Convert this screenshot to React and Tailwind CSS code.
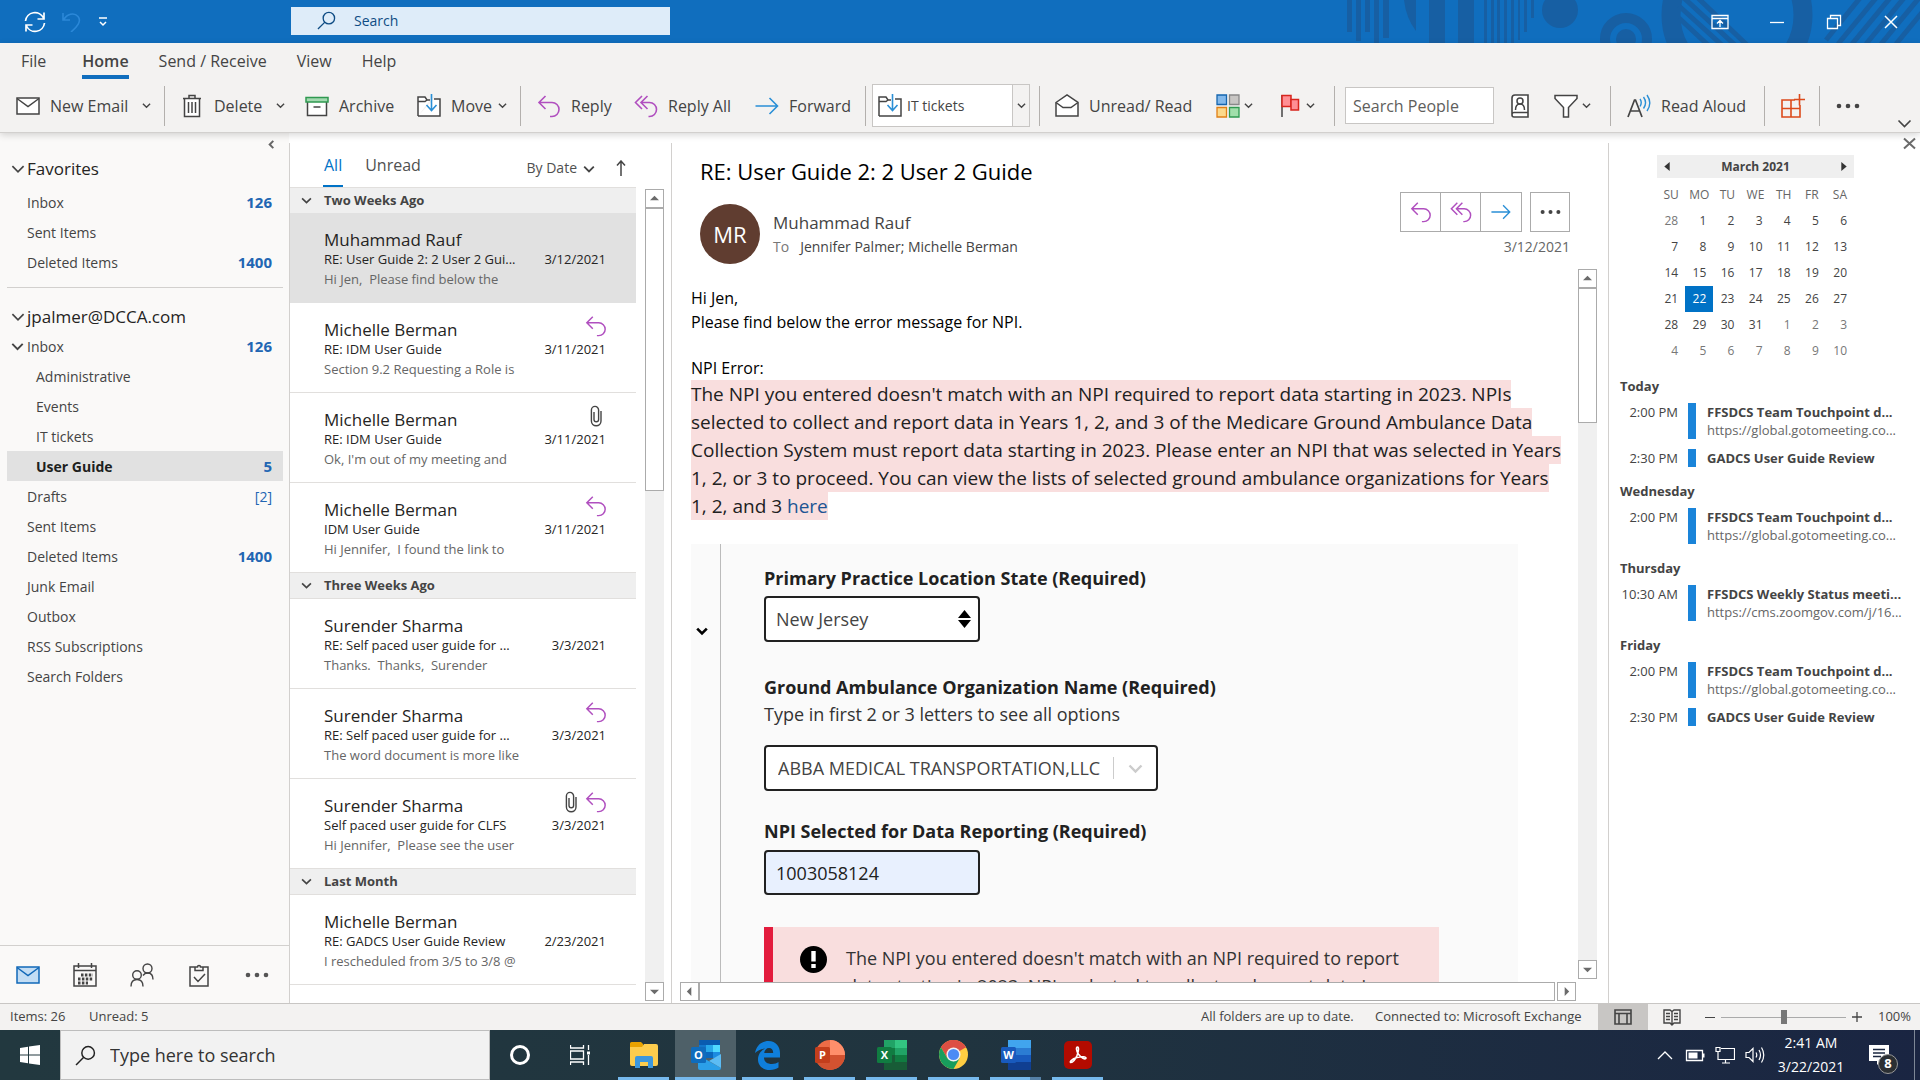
import { useState } from 'react';

const PURPLE = '#b04fbf';
const BLUE = '#2a8fd6';

function Svg({ size = 24, box = '0 0 24 24', className = '', children }) {
  return (
    <svg
      width={size}
      height={size}
      viewBox={box}
      fill="none"
      stroke="#444"
      strokeWidth="1.3"
      className={`shrink-0 ${className}`}
      aria-hidden="true"
    >
      {children}
    </svg>
  );
}

const Chevron = ({ size = 10, color = '#444', width = 1.5, className = '' }) => (
  <Svg size={size} box="0 0 10 10" className={className}>
    <path d="M1 3l4 4 4-4" stroke={color} strokeWidth={width} />
  </Svg>
);

const MailIcon = ({ stroke = '#444', fill = '#fff' }) => (
  <Svg>
    <path d="M1 4h22v16H1z" stroke={stroke} fill={fill} strokeWidth="1.5" />
    <path d="M1 4.5l11 8 11-8" stroke={stroke} strokeWidth="1.5" />
  </Svg>
);

const TrashIcon = () => (
  <Svg>
    <path d="M4.500 4.500v18h15v-18" fill="#fff" strokeWidth="1.500" />
    <path d="M3 4.500h18M9 4V1.500h6V4M8.500 8v11M12 8v11M15.500 8v11" strokeWidth="1.500" />
  </Svg>
);

const ArchiveIcon = () => (
  <Svg>
    <path d="M2.500 8v13.500h19V8" fill="#fff" strokeWidth="1.500" />
    <path d="M1 3.500h22V8H1z" fill="#a3d9b0" stroke="#2f9950" strokeWidth="1.500" />
    <path d="M8.500 13h7" strokeWidth="1.500" />
  </Svg>
);

const MoveIcon = () => (
  <Svg>
    <path d="M1 22V3h7l2 3h3M17 5h6v17H1" fill="#fff" strokeWidth="1.500" />
    <path d="M1 7.500h7l2-1.500" strokeWidth="1.500" />
    <path d="M14.500 0v16M9.500 11l5 5.500 5-5.500" stroke={BLUE} strokeWidth="1.600" />
  </Svg>
);

const ReplyIcon = ({ size = 24 }) => (
  <Svg size={size}>
    <path d="M8.500 2L2 8.500 8.500 15M2 8.500h13a7 7 0 0 1 0 14h-2" stroke={PURPLE} strokeWidth="1.600" />
  </Svg>
);

const ReplyAllIcon = ({ size = 24 }) => (
  <Svg size={size}>
    <path
      d="M8 2L1.500 8.500 8 15M13.500 2L7 8.500l6.500 6.500M7 8.500h8.500a7 7 0 0 1 0 14h-1"
      stroke={PURPLE}
      strokeWidth="1.600"
    />
  </Svg>
);

const ForwardIcon = ({ size = 24 }) => (
  <Svg size={size}>
    <path d="M.5 12h22M14.500 4l8 8-8 8" stroke={BLUE} strokeWidth="1.600" />
  </Svg>
);

const OpenMailIcon = () => (
  <Svg>
    <path d="M1 8.500L12 1l11 7.500V22H1z" fill="#fff" strokeWidth="1.500" />
    <path d="M1 8.500l7 5h8l7-5" strokeWidth="1.500" />
  </Svg>
);

const CategoriesIcon = () => (
  <Svg>
    <path d="M1 1h9.500v9.500H1z" fill="#83b9eb" stroke="#1565ae" />
    <path d="M13.500 1H23v9.500h-9.500z" fill="#c8c6c4" stroke="#888" />
    <path d="M1 13.500h9.500V23H1z" fill="#fbd98b" stroke="#e07f16" />
    <path d="M13.500 13.500H23V23h-9.500z" fill="#a1dfab" stroke="#2f9950" />
  </Svg>
);

const FlagIcon = () => (
  <Svg>
    <path d="M4 1v22" strokeWidth="1.500" />
    <path d="M4 1.500h9v11H4z" fill="#ff8f94" stroke="#d8251d" strokeWidth="1.500" />
    <path d="M13 5.500h7.500v10.500h-7.500z" fill="#ff8f94" stroke="#d8251d" strokeWidth="1.500" />
  </Svg>
);

const AddressBookIcon = () => (
  <Svg>
    <path d="M4 4a3 3 0 0 1 3-3h13v22H6a2 2 0 0 1-2-2zM4 20.500a2 2 0 0 1 2-2h14" fill="#fff" strokeWidth="1.600" />
    <circle cx="12" cy="7" r="3" strokeWidth="1.500" />
    <path d="M7.500 16c0-4 2-6 4.500-6s4.500 2 4.500 6" strokeWidth="1.500" />
  </Svg>
);

const FunnelIcon = () => (
  <Svg>
    <path d="M1 1.500h22v3l-8.500 9V23h-5v-9.500L1 4.500z" fill="#fff" strokeWidth="1.500" />
  </Svg>
);

const ReadAloudIcon = () => (
  <Svg>
    <path d="M1 23L7.500 6h1L15 23M3.500 17h9" strokeWidth="1.700" />
    <path d="M13 5c1.500 2 1.500 5 0 7.500M16.500 3c2.500 3.500 2.500 8 0 11.500M20 1c3.500 5 3.500 11 0 16" stroke={BLUE} strokeWidth="1.400" />
  </Svg>
);

const AddInsIcon = () => (
  <Svg>
    <path d="M1 6h9v17H1zM1 14.500h18V23H10M10 6v8.500M19 14.500V11M10 6h4M18.500 0v11.500M13 5.500h11" stroke="#dc4a1b" strokeWidth="1.600" />
  </Svg>
);

const SearchIcon = ({ size = 20, color = '#0f4c84' }) => (
  <Svg size={size} box="0 0 20 20">
    <circle cx="12.500" cy="7.500" r="6" stroke={color} strokeWidth="1.400" />
    <path d="M8.300 11.700L1 19" stroke={color} strokeWidth="1.400" />
  </Svg>
);

const ClipIcon = () => (
  <Svg size={22} box="0 0 22 22">
    <path d="M16 6v10a4.800 4.800 0 0 1-9.600 0V5a3.600 3.600 0 0 1 7.200 0v9.500a2 2 0 0 1-4.600 0V7" strokeWidth="1.400" />
  </Svg>
);

const Triangle = ({ dir }) => {
  const paths = {
    up: 'M0 7l5-5 5 5z',
    down: 'M0 3l5 5 5-5z',
    left: 'M7 0L2 5l5 5z',
    right: 'M3 0l5 5-5 5z',
  };
  return (
    <svg width="9" height="9" viewBox="0 0 10 10" fill="#6b6b6b" aria-hidden="true">
      <path d={paths[dir]} />
    </svg>
  );
};

const Dots = ({ color = '#444', size = 24 }) => (
  <svg width={size} height="6" viewBox="0 0 24 6" fill={color} aria-hidden="true">
    <circle cx="3" cy="3" r="2.300" />
    <circle cx="12" cy="3" r="2.300" />
    <circle cx="21" cy="3" r="2.300" />
  </svg>
);

function TitleBar() {
  return (
    <header className="relative flex h-[43px] shrink-0 items-center bg-[#106ebe]">
      <svg className="absolute top-0 right-0" width="580" height="43" viewBox="1340 0 580 43" fill="#175fa3" aria-hidden="true">
        <path d="M1347 0h5v32h-5zM1356 0h5v41h-5zM1365 0h5v32h-5zM1374 0h5v43h-5zM1383 0h6v38h-6zM1404 0h12v31q-10-13-12-31zM1429 0h16v43h-16zM1458 0h16v43h-16zM1484 0h3v43h-3zM1491 0h3v43h-3zM1497 0h3v43h-3zM1504 0h3v43h-3zM1511 0h3v43h-3zM1518 0h2v40h-2zM1524 0h3v32h-3zM1531 0h3v18h-3z" />
        <circle cx="1560" cy="10" r="18" />
        <circle cx="1626" cy="39" r="10" />
        <circle cx="1626" cy="39" r="21" fill="none" stroke="#175fa3" strokeWidth="10" />
        <circle cx="1737" cy="15" r="66" fill="none" stroke="#175fa3" strokeWidth="19" />
        <g stroke="#175fa3" strokeWidth="5">
          <path d="M1679 6l44 40M1679 18l30 28M1684 -2l52 48M1698 -2l50 48" />
          <path d="M1826 40l34-42M1838 44l38-46M1852 44l38-46M1866 44l38-46M1881 44l38-46M1896 44l38-46" />
        </g>
      </svg>
      <div className="flex w-[291px] items-center gap-4 pl-6">
        <button aria-label="Send/Receive all folders">
          <Svg size={22} box="0 0 22 22">
            <path d="M1.500 10a9.500 9.500 0 0 1 18-3M20.500 12a9.500 9.500 0 0 1-18 3M20 1.500V8h-6.500M2 20.500V14h6.500" stroke="#fff" strokeWidth="1.700" />
          </Svg>
        </button>
        <button aria-label="Undo">
          <Svg size={20} box="0 0 20 20">
            <path d="M1 1v7h7M1.500 8C5 2 12 0 16 4.500 20 9 15 15 9 20" stroke="#2b88d8" strokeWidth="1.600" />
          </Svg>
        </button>
        <button aria-label="Customize toolbar">
          <Svg size={10} box="0 0 10 10">
            <path d="M1 1h8M2 5l3 3 3-3" stroke="#fff" strokeWidth="1.500" />
          </Svg>
        </button>
      </div>
      <label className="relative -top-px flex h-7 w-[379px] items-center gap-[18px] bg-[#deecf9] pl-[26px]">
        <SearchIcon size={19} />
        <input
          type="text"
          aria-label="Search"
          placeholder="Search"
          className="w-full bg-transparent text-[14px] text-[#0f4c84] outline-none placeholder:text-[#0f4c84]"
        />
      </label>
      <div className="relative ml-auto flex items-center gap-[39px] pr-5">
        <button aria-label="Ribbon display options">
          <Svg size={18} box="0 0 18 18">
            <path d="M1 2.500h16v13H1zM1 5.500h16M9 14V8M6 10.500L9 7.500l3 3" stroke="#fff" />
          </Svg>
        </button>
        <button aria-label="Minimize">
          <Svg size={18} box="0 0 18 18">
            <path d="M2 9.500h14" stroke="#fff" />
          </Svg>
        </button>
        <button aria-label="Restore">
          <Svg size={18} box="0 0 18 18">
            <path d="M2.500 5.500h10v10h-10zM5.500 5V2.500h10v10H13" stroke="#fff" />
          </Svg>
        </button>
        <button aria-label="Close">
          <Svg size={18} box="0 0 18 18">
            <path d="M3 3l12 12M15 3L3 15" stroke="#fff" strokeWidth="1.500" />
          </Svg>
        </button>
      </div>
    </header>
  );
}

const Separator = ({ className = '' }) => <div className={`h-10 w-px shrink-0 bg-[#b3b0ad] ${className}`} />;

function Tool({ icon, label, chevron, width, name }) {
  return (
    <button className={`flex h-10 shrink-0 items-center ${width}`} aria-label={name}>
      {icon}
      {label ? <span className="ml-[10px] whitespace-nowrap">{label}</span> : null}
      {chevron ? <Chevron size={9} className={label ? 'ml-auto' : 'ml-1'} /> : null}
    </button>
  );
}

const menuTabs = ['File', 'Home', 'Send / Receive', 'View', 'Help'];

function Ribbon() {
  const [tab, setTab] = useState('Home');
  return (
    <div className="relative z-10 shrink-0 border-b border-[#d2d0ce] bg-[#f3f2f1] text-[#444] shadow-[0_2px_7px_rgba(0,0,0,0.16)]">
      <nav className="flex h-9 items-end gap-[30px] pl-[21px] text-[16px]">
        {menuTabs.map((t) => (
          <button
            key={t}
            onClick={() => setTab(t)}
            className={`border-b-4 pb-[2px] leading-6 ${t === 'File' ? 'mr-[6px]' : ''} ${
              t === tab ? 'border-[#106ebe] font-semibold' : 'border-transparent'
            }`}
          >
            {t}
          </button>
        ))}
      </nav>
      <div className="flex h-[53px] items-center pl-4 text-[16px]">
        <Tool icon={<MailIcon />} label="New Email" chevron width="w-[135px]" />
        <Separator className="mr-[15px] ml-[13px]" />
        <Tool icon={<TrashIcon />} label="Delete" chevron width="w-[105px]" />
        <Tool icon={<ArchiveIcon />} label="Archive" width="ml-5 w-[92px]" />
        <Tool icon={<MoveIcon />} label="Move" chevron width="ml-5 w-[90px]" />
        <Separator className="ml-[13px] mr-4" />
        <Tool icon={<ReplyIcon />} label="Reply" width="w-[97px]" />
        <Tool icon={<ReplyAllIcon />} label="Reply All" width="w-[121px]" />
        <Tool icon={<ForwardIcon />} label="Forward" width="w-[110px]" />
        <Separator className="mr-[6px]" />
        <div className="flex h-[43px] shrink-0 border border-[#c8c6c4] bg-white text-[14px]">
          <button className="flex w-[139px] items-center gap-[5px] pl-[5px]">
            <MoveIcon />
            IT tickets
          </button>
          <button className="flex w-[17px] items-center justify-center border-l border-[#c8c6c4] bg-[#f3f2f1]" aria-label="More quick steps">
            <Chevron size={9} />
          </button>
        </div>
        <Separator className="mr-[15px] ml-[9px]" />
        <Tool icon={<OpenMailIcon />} label="Unread/ Read" width="w-[161px]" />
        <Tool icon={<CategoriesIcon />} chevron width="w-[62px]" name="Categorize" />
        <Tool icon={<FlagIcon />} chevron width="w-[56px]" name="Follow up" />
        <Separator className="mr-[10px]" />
        <input
          type="text"
          aria-label="Search People"
          placeholder="Search People"
          className="h-[37px] w-[149px] shrink-0 border border-[#c8c6c4] bg-white px-[7px] text-[16px] outline-none placeholder:text-[#605e5c]"
        />
        <Tool icon={<AddressBookIcon />} width="ml-[14px] w-[46px]" name="Address book" />
        <Tool icon={<FunnelIcon />} chevron width="w-[56px]" name="Filter email" />
        <Separator className="mr-4" />
        <Tool icon={<ReadAloudIcon />} label="Read Aloud" width="w-[137px]" />
        <Separator className="mr-4" />
        <Tool icon={<AddInsIcon />} width="w-[38px]" name="Get add-ins" />
        <Separator className="mr-4" />
        <Tool icon={<Dots />} width="w-6" name="More commands" />
        <button className="ml-auto mt-9 pr-2" aria-label="Expand ribbon">
          <Chevron size={15} width={1.1} />
        </button>
      </div>
    </div>
  );
}

const favorites = [
  { name: 'Inbox', count: '126' },
  { name: 'Sent Items' },
  { name: 'Deleted Items', count: '1400' },
];

const folders = [
  { name: 'Inbox', count: '126', open: true },
  { name: 'Administrative', sub: true },
  { name: 'Events', sub: true },
  { name: 'IT tickets', sub: true },
  { name: 'User Guide', sub: true, count: '5', active: true },
  { name: 'Drafts', count: '[2]', light: true },
  { name: 'Sent Items' },
  { name: 'Deleted Items', count: '1400' },
  { name: 'Junk Email' },
  { name: 'Outbox' },
  { name: 'RSS Subscriptions' },
  { name: 'Search Folders' },
];

function Folder({ folder }) {
  return (
    <li>
      <button
        className={`flex h-[30px] w-full items-center pr-[11px] text-left text-[14px] ${
          folder.active ? 'bg-[#e1e1e1] font-bold text-[#201f1e]' : 'text-[#444]'
        }`}
      >
        <span className={`flex items-center justify-end ${folder.sub ? 'w-[29px]' : 'w-5'}`}>
          {folder.open ? <Chevron size={13} className="mr-[3px]" /> : null}
        </span>
        {folder.name}
        <span className={`ml-auto text-[#2266b3] ${folder.light ? '' : 'text-[15px] font-bold'}`}>{folder.count}</span>
      </button>
    </li>
  );
}

function FolderPane() {
  return (
    <aside className="flex w-[289px] shrink-0 flex-col bg-[#faf9f8]">
      <div className="flex-1 pt-[5px] pr-[6px] pl-[7px]">
        <div className="flex h-3 items-center justify-end pr-[7px]">
          <button aria-label="Minimize folder pane">
            <Svg size={9} box="0 0 10 10">
              <path d="M7 1L3 5l4 4" stroke="#666" strokeWidth="2.200" />
            </Svg>
          </button>
        </div>
        <h2 className="mt-1 flex h-[30px] items-center gap-[2px] pl-1 text-[17px] text-[#252423]">
          <Chevron size={14} width={1.2} />
          Favorites
        </h2>
        <ul className="mt-[3px] border-b border-[#d2d0ce] pb-[10px]">
          {favorites.map((f) => (
            <Folder key={f.name} folder={f} />
          ))}
        </ul>
        <h2 className="mt-[14px] flex h-[29px] items-center gap-[2px] pl-1 text-[17px] text-[#252423]">
          <Chevron size={14} width={1.2} />
          jpalmer@DCCA.com
        </h2>
        <ul>
          {folders.map((f) => (
            <Folder key={f.name} folder={f} />
          ))}
        </ul>
      </div>
      <nav className="flex h-[58px] items-center gap-[33px] border-t border-[#d2d0ce] pl-4">
        <button aria-label="Mail"><MailIcon stroke="#1068b8" fill="#c3ddf4" /></button>
        <button aria-label="Calendar">
          <Svg>
            <path d="M1 3h22v20H1zM1 7.500h22M5.500 0v5M18.500 0v5" strokeWidth="1.500" />
            <path d="M8 12h12M5 16h15M5 20h10" strokeWidth="3" strokeDasharray="2.500 1.400" />
          </Svg>
        </button>
        <button aria-label="People">
          <Svg>
            <circle cx="17.500" cy="5.500" r="4.500" strokeWidth="1.400" />
            <circle cx="7" cy="12" r="4.300" strokeWidth="1.400" />
            <path d="M1 23.500c0-4.500 2-7 6-7s6 2.500 6 7M13 12.500c1-1.500 2.500-2.500 4.500-2.500 4 0 5.500 3 5.500 6.500" strokeWidth="1.400" />
          </Svg>
        </button>
        <button aria-label="Tasks">
          <Svg>
            <path d="M8.500 4H3v19h18V4h-5.500M8 7.500h8V4h-2.500a1.500 1.500 0 0 0-3 0H8zM7 14l4 4.500 7-7.500" strokeWidth="1.500" />
          </Svg>
        </button>
        <button aria-label="More"><Dots color="#555" size={26} /></button>
      </nav>
    </aside>
  );
}

const groups = [
  {
    title: 'Two Weeks Ago',
    items: [
      { from: 'Muhammad Rauf', subject: 'RE: User Guide 2: 2 User 2 Gui...', date: '3/12/2021', preview: 'Hi Jen,\u00a0 Please find below the', active: true },
      { from: 'Michelle Berman', subject: 'RE: IDM User Guide', date: '3/11/2021', preview: 'Section 9.2 Requesting a Role is', replied: true },
      { from: 'Michelle Berman', subject: 'RE: IDM User Guide', date: '3/11/2021', preview: "Ok, I'm out of my meeting and", clip: true },
      { from: 'Michelle Berman', subject: 'IDM User Guide', date: '3/11/2021', preview: 'Hi Jennifer,\u00a0 I found the link to', replied: true },
    ],
  },
  {
    title: 'Three Weeks Ago',
    items: [
      { from: 'Surender Sharma', subject: 'RE: Self paced user guide for ...', date: '3/3/2021', preview: 'Thanks.\u00a0 Thanks,\u00a0 Surender' },
      { from: 'Surender Sharma', subject: 'RE: Self paced user guide for ...', date: '3/3/2021', preview: 'The word document is more like', replied: true },
      { from: 'Surender Sharma', subject: 'Self paced user guide for CLFS', date: '3/3/2021', preview: 'Hi Jennifer,\u00a0 Please see the user', clip: true, replied: true },
    ],
  },
  {
    title: 'Last Month',
    items: [
      { from: 'Michelle Berman', subject: 'RE: GADCS User Guide Review', date: '2/23/2021', preview: 'I rescheduled from 3/5 to 3/8 @' },
    ],
  },
];

function ScrollButton({ dir }) {
  return (
    <button className="flex size-[19px] shrink-0 items-center justify-center border border-[#ababab] bg-white" aria-label={`Scroll ${dir}`}>
      <Triangle dir={dir} />
    </button>
  );
}

function VerticalScroll({ thumb, className }) {
  return (
    <div className={`flex w-[19px] shrink-0 flex-col bg-[#f0f0f0] ${className}`}>
      <ScrollButton dir="up" />
      <div className={`border border-[#ababab] bg-white ${thumb}`} />
      <div className="flex-1" />
      <ScrollButton dir="down" />
    </div>
  );
}

function MessageItem({ item }) {
  return (
    <li
      className={`flex h-[90px] flex-col justify-center border-b pr-[30px] pl-[34px] pt-px ${
        item.active ? 'border-[#e1e1e1] bg-[#e1e1e1]' : 'border-[#e1dfdd]'
      }`}
    >
      <div className="flex h-[22px] items-center">
        <span className="text-[17px] text-[#252423]">{item.from}</span>
        <span className="-mt-2 -mr-px ml-auto flex items-center gap-[3px]">
          {item.clip ? <ClipIcon /> : null}
          {item.replied ? <ReplyIcon size={22} /> : null}
        </span>
      </div>
      <div className="flex h-[19px] items-center justify-between text-[13px] text-[#252423]">
        <span>{item.subject}</span>
        <span>{item.date}</span>
      </div>
      <p className="text-[13px] leading-[18px] text-[#666]">{item.preview}</p>
    </li>
  );
}

function MessageList() {
  return (
    <section className="flex w-[381px] shrink-0 gap-[9px] bg-white">
      <div className="flex w-[346px] flex-col">
        <div className="flex h-[54px] items-end pr-[7px] pl-[33px]">
          <button className="flex h-[34px] items-start border-b-2 border-[#0072c6] px-px text-[16px] leading-6 text-[#0072c6]">All</button>
          <button className="ml-[22px] flex h-[34px] items-start text-[16px] leading-6 text-[#505050]">Unread</button>
          <button className="ml-auto flex h-[34px] items-start gap-[6px] pt-[3px] text-[14px] leading-6 text-[#505050]">
            By Date
            <Chevron size={12} className="mt-[7px]" />
          </button>
          <button className="ml-[18px] flex h-[27px] items-start" aria-label="Sort direction">
            <Svg size={16} box="0 0 16 16">
              <path d="M8 16V1M4 5.500L8 1l4 4.500" strokeWidth="1.500" />
            </Svg>
          </button>
        </div>
        {groups.map((g, i) => (
          <div key={g.title}>
            <h3
              className={`flex items-center gap-3 border-[#e1dfdd] bg-[#efefef] pl-[11px] text-[13px] font-bold text-[#444] ${
                i === 0 ? 'h-[26px] border-t' : '-mt-px h-[27px] border-y'
              }`}
            >
              <Chevron size={11} />
              {g.title}
            </h3>
            <ul>
              {g.items.map((item, j) => (
                <MessageItem key={j} item={item} />
              ))}
            </ul>
          </div>
        ))}
      </div>
      <VerticalScroll thumb="h-[283px]" className="mt-14 mb-[2px]" />
    </section>
  );
}

function FormShot() {
  return (
    <div className="mt-6 flex w-[827px] flex-1 overflow-hidden bg-[#fafafa] text-[#212121]">
      <div className="flex w-[30px] shrink-0 justify-start border-r border-[#bbb] pt-[81px] pl-[5px]">
        <Chevron size={12} color="#000" width={2.2} />
      </div>
      <form className="flex flex-1 flex-col pt-[21px] pl-[43px] text-[18px]">
        <label htmlFor="state" className="leading-[26px] font-bold">Primary Practice Location State (Required)</label>
        <div className="relative mt-[5px] w-[216px] shrink-0">
          <select id="state" className="block h-[46px] w-full appearance-none rounded-[4px] border-2 border-[#212121] bg-white pl-[10px] text-[#444]">
            <option>New Jersey</option>
          </select>
          <svg className="pointer-events-none absolute top-[14px] right-[9px]" width="13" height="18" viewBox="0 0 13 18" aria-hidden="true">
            <path d="M6.500 0L13 8H0zM6.500 18L0 10h13z" fill="#000" />
          </svg>
        </div>
        <label htmlFor="org" className="mt-8 leading-[26px] font-bold">Ground Ambulance Organization Name (Required)</label>
        <p className="leading-7 text-[#333]">Type in first 2 or 3 letters to see all options</p>
        <div className="relative mt-[17px] w-[394px] shrink-0">
          <select id="org" className="block h-[46px] w-full appearance-none rounded-[4px] border-2 border-[#212121] bg-white pl-3 text-[#444]">
            <option>ABBA MEDICAL TRANSPORTATION,LLC</option>
          </select>
          <span className="pointer-events-none absolute top-3 right-[15px] flex h-[22px] items-center border-l border-[#ccc] pl-[14px]">
            <Chevron size={15} color="#ccc" width={1.6} />
          </span>
        </div>
        <label htmlFor="npi" className="mt-[27px] leading-[26px] font-bold">NPI Selected for Data Reporting (Required)</label>
        <input
          id="npi"
          type="text"
          defaultValue="1003058124"
          className="mt-[6px] h-[45px] w-[216px] shrink-0 rounded-[4px] border-2 border-[#212121] bg-[#e8f0fe] pl-[10px]"
        />
        <div className="mt-8 flex w-[675px] shrink-0 border-l-[9px] border-[#e31c3d] bg-[#f9dede] pt-[17px] pl-[27px]">
          <svg width="27" height="27" viewBox="0 0 27 27" className="mt-[2px] shrink-0" aria-hidden="true">
            <circle cx="13.500" cy="13.500" r="13.500" fill="#000" />
            <path d="M11.300 5h4.400v10.500h-4.400zM11.300 18h4.400v4h-4.400z" fill="#fff" />
          </svg>
          <p className="ml-[19px] h-[84px] leading-7 text-[#333]">
            The NPI you entered doesn't match with an NPI required to report
            <br />
            data starting in 2023. NPIs selected to collect and report data in
          </p>
        </div>
      </form>
    </div>
  );
}

const headerButton = 'flex h-full w-10 items-center justify-center';

function ReadingPane() {
  return (
    <section className="flex min-w-0 flex-1 flex-col bg-white pr-[11px] pl-2">
      <div className="pr-[27px] pl-5">
        <h1 className="pt-[23px] text-[22px] leading-[30px] text-black">RE: User Guide 2: 2 User 2 Guide</h1>
        <div className="flex items-start pt-[6px]">
          <div className="mt-3 flex size-[60px] items-center justify-center rounded-full bg-[#603d30] text-[22px] text-white">MR</div>
          <div className="mt-[18px] ml-[13px]">
            <p className="text-[17px] leading-[26px] text-[#444]">Muhammad Rauf</p>
            <p className="text-[14px] leading-[22px] text-[#444]">
              <span className="mr-[11px] text-[#777]">To</span>
              Jennifer Palmer; Michelle Berman
            </p>
          </div>
          <div className="ml-auto flex flex-col items-end">
            <div className="flex h-10 gap-2">
              <div className="flex divide-x divide-[#ababab] border border-[#ababab]">
                <button className={headerButton} aria-label="Reply"><ReplyIcon size={22} /></button>
                <button className={headerButton} aria-label="Reply all"><ReplyAllIcon size={22} /></button>
                <button className={headerButton} aria-label="Forward"><ForwardIcon size={20} /></button>
              </div>
              <button className={`${headerButton} border border-[#ababab]`} aria-label="More actions"><Dots size={21} /></button>
            </div>
            <p className="mt-[3px] text-[14px] leading-6 text-[#666]">3/12/2021</p>
          </div>
        </div>
      </div>
      <div className="flex min-h-0 flex-1">
        <article className="mt-[22px] flex min-w-0 flex-1 flex-col overflow-hidden pl-[11px] text-[16px] leading-6 text-black">
          <p>Hi Jen,</p>
          <p>Please find below the error message for NPI.</p>
          <p className="mt-[22px]">NPI Error:</p>
          <p className="text-[19px] leading-7 whitespace-nowrap text-[#212121]">
            <span className="bg-[#f9dede] box-decoration-clone py-px">
              The NPI you entered doesn't match with an NPI required to report data starting in 2023. NPIs
              <br />
              selected to collect and report data in Years 1, 2, and 3 of the Medicare Ground Ambulance Data
              <br />
              Collection System must report data starting in 2023. Please enter an NPI that was selected in Years
              <br />
              1, 2, or 3 to proceed. You can view the lists of selected ground ambulance organizations for Years
              <br />
              1, 2, and 3 <a href="#" className="text-[#205493]">here</a>
            </span>
          </p>
          <FormShot />
        </article>
        <VerticalScroll thumb="h-[135px]" className="mt-[5px] mb-[3px]" />
      </div>
      <div className="mr-[21px] mb-[2px] flex shrink-0">
        <ScrollButton dir="left" />
        <div className="flex-1 border border-[#ababab]" />
        <div className="w-[2px]" />
        <ScrollButton dir="right" />
      </div>
    </section>
  );
}

const weekDays = ['SU', 'MO', 'TU', 'WE', 'TH', 'FR', 'SA'];
const weeks = [
  [28, 1, 2, 3, 4, 5, 6],
  [7, 8, 9, 10, 11, 12, 13],
  [14, 15, 16, 17, 18, 19, 20],
  [21, 22, 23, 24, 25, 26, 27],
  [28, 29, 30, 31, 1, 2, 3],
  [4, 5, 6, 7, 8, 9, 10],
];

const touchpoint = { time: '2:00 PM', title: 'FFSDCS Team Touchpoint d...', url: 'https://global.gotomeeting.co...' };
const review = { time: '2:30 PM', title: 'GADCS User Guide Review' };

const agenda = [
  { day: 'Today', events: [touchpoint, review] },
  { day: 'Wednesday', events: [touchpoint] },
  { day: 'Thursday', events: [{ time: '10:30 AM', title: 'FFSDCS Weekly Status meeti...', url: 'https://cms.zoomgov.com/j/16...' }] },
  { day: 'Friday', events: [touchpoint, review] },
];

function isOtherMonth(row, day) {
  return (row === 0 && day > 20) || (row > 3 && day < 20);
}

function CalendarPane() {
  return (
    <aside className="w-[311px] shrink-0 bg-white text-[#444]">
      <div className="flex h-[22px] justify-end pt-1 pr-1">
        <button className="h-[13px]" aria-label="Close calendar">
          <Svg size={13} box="0 0 13 13">
            <path d="M1 1.500l11 10M12 1.500l-11 10" stroke="#6b6b6b" strokeWidth="2" />
          </Svg>
        </button>
      </div>
      <div className="ml-12 w-[197px]">
        <div className="flex h-[23px] items-center justify-between bg-[#efefef] px-[6px] text-[12px] font-bold">
          <button aria-label="Previous month">
            <svg width="8" height="9" viewBox="0 0 8 10" fill="#333"><path d="M7 0L1 5l6 5z" /></svg>
          </button>
          March 2021
          <button aria-label="Next month">
            <svg width="8" height="9" viewBox="0 0 8 10" fill="#333"><path d="M1 0l6 5-6 5z" /></svg>
          </button>
        </div>
        <table className="mt-1 w-full table-fixed border-collapse text-[12px]">
          <thead>
            <tr className="h-[26px]">
              {weekDays.map((d) => (
                <th key={d} className="p-0 text-center font-normal text-[#666]">{d}</th>
              ))}
            </tr>
          </thead>
          <tbody>
            {weeks.map((week, row) => (
              <tr key={row} className="h-[26px]">
                {week.map((day) => (
                  <td
                    key={day}
                    className={`p-0 pr-[7px] text-right ${
                      row === 3 && day === 22 ? 'bg-[#0072c6] text-white' : isOtherMonth(row, day) ? 'text-[#777]' : ''
                    }`}
                  >
                    {day}
                  </td>
                ))}
              </tr>
            ))}
          </tbody>
        </table>
      </div>
      <div className="mt-[-2px] pl-[11px]">
        {agenda.map(({ day, events }) => (
          <section key={day} className="pt-[14px]">
            <h3 className="mb-[7px] text-[13px] leading-5 font-bold">{day}</h3>
            <div className="flex flex-col gap-[10px]">
              {events.map((e) => (
                <div key={e.time} className="flex text-[13px] leading-[18px]">
                  <span className="w-[58px] text-right whitespace-nowrap">{e.time}</span>
                  <span className="mr-[11px] ml-[10px] w-2 bg-[#1a84d9]" />
                  <div className="whitespace-nowrap">
                    <p className="font-bold">{e.title}</p>
                    {e.url ? <p className="text-[#666]">{e.url}</p> : null}
                  </div>
                </div>
              ))}
            </div>
          </section>
        ))}
      </div>
    </aside>
  );
}

function StatusBar() {
  return (
    <footer className="flex h-[27px] shrink-0 items-center border-t border-[#c8c6c4] bg-[#f3f2f1] pl-[10px] text-[13px] text-[#444]">
      <span className="w-[79px]">Items: 26</span>
      <span>Unread: 5</span>
      <span className="ml-auto w-[174px] whitespace-nowrap">All folders are up to date.</span>
      <span className="w-[223px] whitespace-nowrap">Connected to: Microsoft Exchange</span>
      <button className="flex h-full w-[50px] items-center justify-center bg-[#c8c6c4]" aria-label="Normal view">
        <Svg size={18} box="0 0 18 18">
          <path d="M1 2h16v14H1zM1 5.500h16M5 5.500V16M13 5.500V16" strokeWidth="1.600" />
        </Svg>
      </button>
      <button className="ml-[15px]" aria-label="Reading view">
        <Svg size={18} box="0 0 18 18">
          <path d="M1 2h6l2 1.500L11 2h6v13h-6l-2 2-2-2H1zM9 3.500V17M3 5.500h4M3 8.500h4M3 11.500h4M11 5.500h4M11 8.500h4M11 11.500h4" strokeWidth="1.400" />
        </Svg>
      </button>
      <button className="ml-6 h-px w-[10px] bg-[#444]" aria-label="Zoom out" />
      <input
        type="range"
        aria-label="Zoom"
        defaultValue="50"
        className="mx-[6px] h-[14px] w-[125px] appearance-none bg-[linear-gradient(#aaa,#aaa)] bg-[length:100%_1px] bg-center bg-no-repeat [&::-webkit-slider-thumb]:h-[14px] [&::-webkit-slider-thumb]:w-[6px] [&::-webkit-slider-thumb]:appearance-none [&::-webkit-slider-thumb]:bg-[#777]"
      />
      <button aria-label="Zoom in">
        <Svg size={10} box="0 0 10 10"><path d="M0 5h10M5 0v10" /></Svg>
      </button>
      <span className="w-[58px] pl-4">100%</span>
    </footer>
  );
}

// Office tiles share a letter plate over a coloured shape
function OfficeTile({ letter, plate, children }) {
  return (
    <svg width="30" height="30" viewBox="0 0 30 30" aria-hidden="true">
      {children}
      <rect x="0" y="7" width="15" height="16" rx="1.500" fill={plate} />
      <text x="7.500" y="19" textAnchor="middle" fontSize="11" fontWeight="700" fill="#fff" fontFamily="Open Sans, sans-serif">
        {letter}
      </text>
    </svg>
  );
}

const ExplorerIcon = () => (
  <svg width="28" height="26" viewBox="0 0 28 26" aria-hidden="true">
    <path d="M0 1.500A1.500 1.500 0 0 1 1.500 0H11l2 2v4H0z" fill="#e8a200" />
    <path d="M0 5h12l2-3h12a2 2 0 0 1 2 2v18a2 2 0 0 1-2 2H2a2 2 0 0 1-2-2z" fill="#fccc4d" />
    <path d="M5 26V16a2 2 0 0 1 2-2h14a2 2 0 0 1 2 2v10h-5v-6h-8v6z" fill="#3c97dd" />
  </svg>
);

const OutlookIcon = () => (
  <OfficeTile letter="O" plate="#0f6cbd">
    <path d="M8 0h21v12H8z" fill="#0a5cb0" />
    <path d="M8 5h7v7H8z" fill="#1377cc" />
    <path d="M15 5h7v7h-7z" fill="#28a8ea" />
    <path d="M22 5h7v7h-7z" fill="#50d9ff" />
    <path d="M15 12h7v6h-7z" fill="#0a67bd" />
    <path d="M22 12h7v6h-7z" fill="#1c8be0" />
    <path d="M7 15l23 13a2 2 0 0 1-2 2H9a2 2 0 0 1-2-2z" fill="#2b9fe8" />
    <path d="M30 14v14L18 21z" fill="#5cbcf4" />
  </OfficeTile>
);

const EdgeIcon = () => (
  <svg width="26" height="30" viewBox="0 0 26 30" aria-hidden="true">
    <path
      d="M0 13C1.500 5 7 1 13.500 1 21 1 25 7 25 13v4.500H9c0 4.500 3.500 6.500 8 6.500 2.500 0 5-.8 6.500-2v5.500C21.500 29 18.500 30 15 30 7.500 30 3 25.500 3 19.500c0-5 3-9 7-11C6 9 2.500 10.500 0 13zM9.200 13h9C18.200 9.500 16.500 8 14 8s-4.500 2-4.800 5z"
      fill="#0f7fdb"
      fillRule="evenodd"
    />
  </svg>
);

const PowerPointIcon = () => (
  <OfficeTile letter="P" plate="#c43e1c">
    <circle cx="15" cy="15" r="15" fill="#ed6c47" />
    <path d="M15 0a15 15 0 0 1 15 15H15z" fill="#ff8f6b" />
    <path d="M0 15a15 15 0 0 0 30 0z" fill="#d35230" />
  </OfficeTile>
);

const ExcelIcon = () => (
  <OfficeTile letter="X" plate="#107c41">
    <path d="M7 0h12v8H7z" fill="#21a366" />
    <path d="M18 0h12v8H18z" fill="#33c481" />
    <path d="M7 8h12v7H7z" fill="#107c41" />
    <path d="M18 8h12v7H18z" fill="#21a366" />
    <path d="M7 15h23v15H7z" fill="#185c37" />
    <path d="M18 15h12v7H18z" fill="#107c41" />
  </OfficeTile>
);

const WordIcon = () => (
  <OfficeTile letter="W" plate="#185abd">
    <path d="M7 0h23v8H7z" fill="#41a5ee" />
    <path d="M7 8h23v7H7z" fill="#2b7cd3" />
    <path d="M7 15h23v7H7z" fill="#185abd" />
    <path d="M7 22h23v8H7z" fill="#103f91" />
  </OfficeTile>
);

const ChromeIcon = () => (
  <svg width="29" height="29" viewBox="0 0 28 28" aria-hidden="true">
    <circle cx="14" cy="14" r="14" fill="#ffcd42" />
    <path d="M14 14L1.900 7A14 14 0 0 1 26.100 7z" fill="#dd4f43" />
    <path d="M14 7h12.100A14 14 0 0 0 1.900 7L8 17.500z" fill="#dd4f43" />
    <path d="M1.900 7A14 14 0 0 0 14 28l6-10.500-6 3-6-3z" fill="#189d5c" />
    <circle cx="14" cy="14" r="6.800" fill="#f1f1f1" />
    <circle cx="14" cy="14" r="5.400" fill="#4c8bf5" />
  </svg>
);

const AcrobatIcon = () => (
  <svg width="28" height="28" viewBox="0 0 28 28" aria-hidden="true">
    <rect width="28" height="28" rx="5" fill="#b30b00" />
    <path
      d="M7 21.500c-2 0 .5-3.500 6-5 5-1.300 9.500-.8 9 .8-.6 1.700-5-.5-7.500-4C12 9.500 12 6 13.500 6s1.300 4-.5 8.500C11 19 8.500 21.500 7 21.500z"
      fill="none"
      stroke="#fff"
      strokeWidth="1.600"
    />
  </svg>
);

const apps = [
  { name: 'File Explorer', icon: <ExplorerIcon /> },
  { name: 'Outlook', icon: <OutlookIcon />, active: true },
  { name: 'Edge', icon: <EdgeIcon /> },
  { name: 'PowerPoint', icon: <PowerPointIcon /> },
  { name: 'Excel', icon: <ExcelIcon /> },
  { name: 'Chrome', icon: <ChromeIcon /> },
  { name: 'Word', icon: <WordIcon />, stacked: true },
  { name: 'Acrobat', icon: <AcrobatIcon /> },
];

function Taskbar() {
  return (
    <div className="flex h-[50px] shrink-0 items-center bg-linear-to-r from-[#22383f] via-[#20343f] to-[#1a2542] text-white">
      <button className="flex w-[60px] justify-center" aria-label="Start">
        <svg width="20" height="20" viewBox="0 0 20 20" fill="#fff">
          <path d="M0 3l8-1.200v7.700H0zM9 1.600L20 0v9.500H9zM0 10.500h8v7.700L0 17zM9 10.500h11V20L9 18.400z" />
        </svg>
      </button>
      <label className="flex h-full w-[430px] items-center gap-[14px] border border-[#bdbdbd] bg-[#f2f2f2] pl-[14px]">
        <SearchIcon size={21} color="#222" />
        <input
          type="text"
          aria-label="Type here to search"
          placeholder="Type here to search"
          className="w-full bg-transparent text-[18px] outline-none placeholder:text-[#333]"
        />
      </label>
      <button className="flex w-[60px] justify-center" aria-label="Cortana">
        <span className="size-5 rounded-full border-[3px] border-white" />
      </button>
      <button className="flex w-[60px] justify-center" aria-label="Task view">
        <Svg size={20} box="0 0 20 20">
          <path d="M.500 0v3h13V0M.500 20v-3h13v3M.500 6h13v8H.500zM18.500 0v5M18.500 10v10" stroke="#fff" />
          <path d="M17 6.500h3v3h-3z" fill="#fff" stroke="none" />
        </Svg>
      </button>
      <div className="flex h-full gap-px pl-[3px]">
        {apps.map((app) => (
          <button
            key={app.name}
            aria-label={app.name}
            className={`flex h-full w-[61px] flex-col items-center ${app.active ? 'bg-[#4e6068]' : ''}`}
          >
            <span className="flex flex-1 items-center pt-[2px]">{app.icon}</span>
            <span className={`flex h-[3px] ${app.active ? 'w-[61px]' : 'w-[51px]'}`}>
              <span className="flex-1 bg-[#76b9ed]" />
              {app.stacked ? <span className="w-[11px] bg-[#5580a5]" /> : null}
            </span>
          </button>
        ))}
      </div>
      <div className="ml-auto flex h-full items-center">
        <button aria-label="Show hidden icons">
          <Svg size={16} box="0 0 16 16"><path d="M1 12l7-7 7 7" stroke="#fff" /></Svg>
        </button>
        <Svg size={20} box="0 0 20 20" className="ml-3">
          <path d="M1.500 5.500h16v10h-16z" stroke="#fff" />
          <path d="M3.500 7.500h9v6h-9zM18 8.500h1.500v4H18z" fill="#fff" stroke="none" />
        </Svg>
        <Svg size={20} box="0 0 20 20" className="ml-[10px]">
          <path d="M6 3.500h13.500v11H3V10M10.500 14.500v3M7 18h8M1 2.500h4v4H1zM3 6.500V10" stroke="#fff" strokeWidth="1.200" />
        </Svg>
        <Svg size={20} box="0 0 20 20" className="ml-[10px]">
          <path d="M1 7.500h3l4-4v13l-4-4H1zM11 7.500q1.500 2.500 0 5M14 5q3 5 0 10M16.500 2.500q4.500 7.500 0 15" stroke="#fff" strokeWidth="1.200" />
        </Svg>
        <div className="w-[92px] text-center text-[14px] leading-6">
          <p>2:41 AM</p>
          <p>3/22/2021</p>
        </div>
        <button className="relative mr-[25px] ml-3" aria-label="8 notifications">
          <svg width="20" height="20" viewBox="0 0 20 20">
            <path d="M0 0h20v16h-8l-4 4v-4H0z" fill="#fff" />
            <path d="M4 4.500h12M4 8h12M4 11.500h8" stroke="#1b2740" strokeWidth="1.300" />
          </svg>
          <span className="absolute top-[9px] left-[9px] flex size-5 items-center justify-center rounded-full border border-[#999] bg-[#2b2f33] text-[13px] font-bold">
            8
          </span>
        </button>
        <div className="mr-[5px] h-full w-px bg-[#7d8796]" />
      </div>
    </div>
  );
}

const Divider = () => <div className="mt-[10px] w-px shrink-0 bg-[#d2d0ce]" />;

export default function App() {
  return (
    <div className="flex h-screen flex-col overflow-hidden bg-white font-['Open_Sans','Noto_Sans',sans-serif]">
      <TitleBar />
      <Ribbon />
      <main className="flex min-h-0 flex-1">
        <FolderPane />
        <Divider />
        <MessageList />
        <Divider />
        <ReadingPane />
        <Divider />
        <CalendarPane />
      </main>
      <StatusBar />
      <Taskbar />
    </div>
  );
}
